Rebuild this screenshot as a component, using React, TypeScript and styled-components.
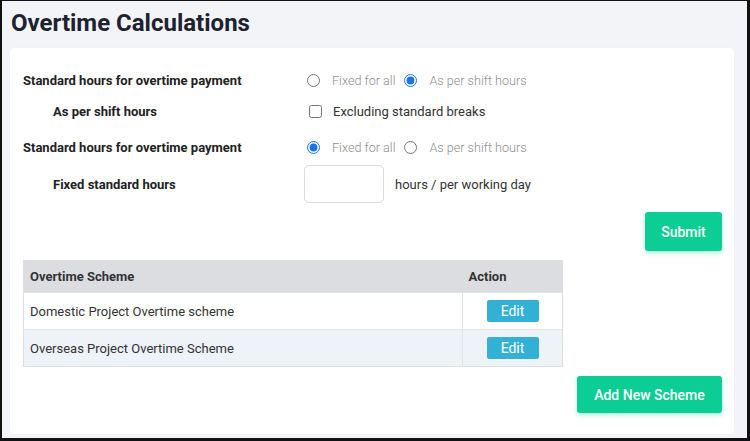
import React from "react";
import styled, { createGlobalStyle } from "styled-components";

const GlobalStyle = createGlobalStyle`
  html, body { margin: 0; padding: 0; }
  body { font-family: Roboto, "Liberation Sans", Arial, sans-serif; background: #fff; }
  * { box-sizing: border-box; }
`;

const Frame = styled.div`
  width: 750px;
  height: 441px;
  border-style: solid;
  border-color: #111;
  border-width: 1px 3px 3px 2px;
  background: #f3f4f8;
  padding: 0 13px 4px 8px;
  display: flex;
  flex-direction: column;
  overflow: hidden;
`;

const Title = styled.h1`
  margin: 0;
  padding: 7px 0 0 1px;
  height: 47px;
  font-size: 24px;
  font-weight: 700;
  color: #1d2230;
  line-height: 30px;
`;

const Card = styled.div`
  flex: 1;
  background: #fff;
  border-radius: 4px;
  box-shadow: 0 0 2px rgba(0, 0, 0, 0.04);
  padding: 19px 12px 0 13px;
  display: flex;
  flex-direction: column;
`;

const Row = styled.div<{ $h: number; $mt: number }>`
  display: flex;
  align-items: center;
  height: ${(p) => p.$h}px;
  margin-top: ${(p) => p.$mt}px;
`;

const Label = styled.div<{ $indent?: boolean }>`
  width: 284px;
  padding-left: ${(p) => (p.$indent ? 30 : 0)}px;
  font-size: 13px;
  font-weight: 700;
  color: #222;
`;

const Controls = styled.div`
  display: flex;
  align-items: center;
`;

const Radio = styled.input.attrs({ type: "radio" })`
  width: 13px;
  height: 13px;
  margin: 0 12px 0 0;
  accent-color: #1a73e8;
`;

const Check = styled.input.attrs({ type: "checkbox" })`
  width: 13px;
  height: 13px;
  margin: 0 11px 0 2px;
`;

const OptText = styled.span<{ $muted?: boolean; $gap?: number }>`
  font-size: ${(p) => (p.$muted ? "12.6px" : "13px")};
  font-weight: ${(p) => (p.$muted ? 300 : 400)};
  color: ${(p) => (p.$muted ? "#8e8e8e" : "#333")};
  margin-right: ${(p) => p.$gap ?? 0}px;
`;

const HoursInput = styled.input.attrs({ type: "text" })`
  width: 80px;
  height: 38px;
  margin: 0 11px 0 -3px;
  border: 1px solid #dcdcdc;
  border-radius: 5px;
  outline: none;
`;

const ButtonRow = styled.div<{ $mt: number }>`
  display: flex;
  justify-content: flex-end;
  margin-top: ${(p) => p.$mt}px;
`;

const GreenButton = styled.button<{ $w: number; $h: number }>`
  width: ${(p) => p.$w}px;
  height: ${(p) => p.$h}px;
  border: none;
  border-radius: 3px;
  background: #0ccd93;
  color: #fff;
  font-family: Roboto, "Liberation Sans", Arial, sans-serif;
  font-size: 14px;
  font-weight: 500;
  box-shadow: 0 2px 5px rgba(12, 205, 147, 0.35);
`;

const Table = styled.table`
  width: 540px;
  margin-top: 9px;
  border-collapse: collapse;
  border: 1px solid #dedede;
  font-size: 13px;
  color: #333;
`;

const Th = styled.th<{ $w?: number }>`
  height: 32px;
  background: #dcdde1;
  text-align: left;
  font-weight: 700;
  padding: 0 6px;
  width: ${(p) => (p.$w ? `${p.$w}px` : "auto")};
`;

const Tr = styled.tr<{ $alt?: boolean }>`
  background: ${(p) => (p.$alt ? "#eef2f9" : "#fff")};
`;

const Td = styled.td<{ $center?: boolean }>`
  height: 37px;
  padding: 0 6px;
  text-align: ${(p) => (p.$center ? "center" : "left")};
  border-top: 1px solid #e3e3e3;
  & + & { border-left: 1px solid #e3e3e3; }
`;

const EditButton = styled.button`
  width: 52px;
  height: 22px;
  border: none;
  border-radius: 2px;
  background: #33b1d4;
  color: #fff;
  font-family: Roboto, "Liberation Sans", Arial, sans-serif;
  font-size: 14px;
  padding: 0;
  vertical-align: middle;
`;

export default function App() {
  return (
    <>
      <GlobalStyle />
      <Frame>
        <Title>Overtime Calculations</Title>
        <Card>
          <Row $h={26} $mt={0}>
            <Label>Standard hours for overtime payment</Label>
            <Controls>
              <Radio name="a" />
              <OptText $muted $gap={9}>Fixed for all</OptText>
              <Radio name="a" defaultChecked />
              <OptText $muted>As per shift hours</OptText>
            </Controls>
          </Row>
          <Row $h={26} $mt={5}>
            <Label $indent>As per shift hours</Label>
            <Controls>
              <Check />
              <OptText>Excluding standard breaks</OptText>
            </Controls>
          </Row>
          <Row $h={26} $mt={10}>
            <Label>Standard hours for overtime payment</Label>
            <Controls>
              <Radio name="b" defaultChecked />
              <OptText $muted $gap={9}>Fixed for all</OptText>
              <Radio name="b" />
              <OptText $muted>As per shift hours</OptText>
            </Controls>
          </Row>
          <Row $h={38} $mt={5}>
            <Label $indent>Fixed standard hours</Label>
            <Controls>
              <HoursInput />
              <OptText>hours / per working day</OptText>
            </Controls>
          </Row>
          <ButtonRow $mt={9}>
            <GreenButton $w={77} $h={39}>Submit</GreenButton>
          </ButtonRow>
          <Table>
            <thead>
              <tr>
                <Th $w={439}>Overtime Scheme</Th>
                <Th>Action</Th>
              </tr>
            </thead>
            <tbody>
              <Tr>
                <Td>Domestic Project Overtime scheme</Td>
                <Td $center><EditButton>Edit</EditButton></Td>
              </Tr>
              <Tr $alt>
                <Td>Overseas Project Overtime Scheme</Td>
                <Td $center><EditButton>Edit</EditButton></Td>
              </Tr>
            </tbody>
          </Table>
          <ButtonRow $mt={9}>
            <GreenButton $w={145} $h={37}>Add New Scheme</GreenButton>
          </ButtonRow>
        </Card>
      </Frame>
    </>
  );
}
